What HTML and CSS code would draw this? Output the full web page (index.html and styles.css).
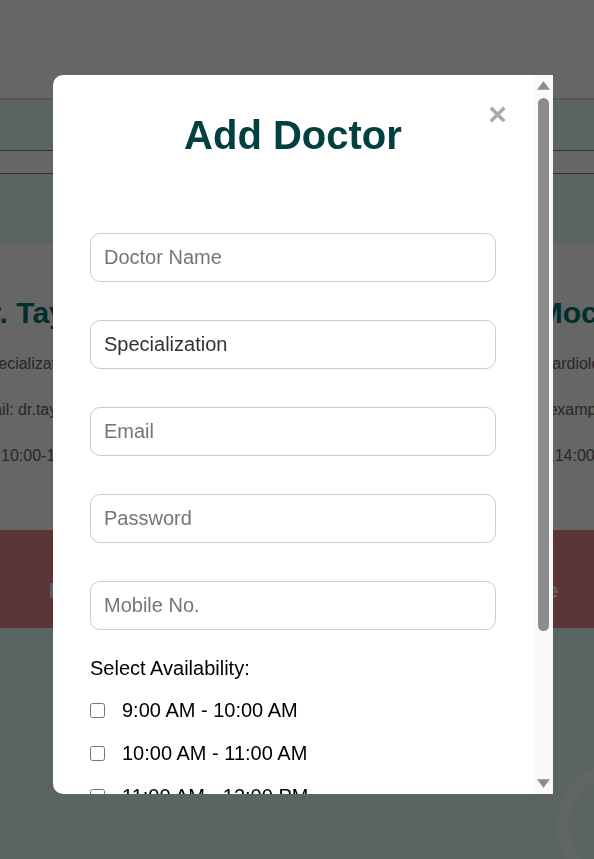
FILE: index.html
```html
<!DOCTYPE html>
<html lang="en">
<head>
<meta charset="utf-8">
<title>Add Doctor</title>
<link rel="stylesheet" href="styles.css">
</head>
<body>
<div class="page">
  <header class="site-header"></header>
  <nav class="nav-bar"></nav>
  <div class="sub-bar"></div>
  <section class="toolbar"></section>
  <section class="cards">
    <article class="card">
      <div class="card-body">
        <h3>Dr. Taylor Smith</h3>
        <p>Specialization: Dermatologist</p>
        <p>Email: dr.taylor@example.co.uk</p>
        <p>Mon,10:00-11:00,Fri,14:00-15:00</p>
      </div>
      <button class="delete-btn" type="button">Delete</button>
    </article>
    <article class="card">
      <div class="card-body">
        <h3>Dr. Sam Patel</h3>
        <p>Specialization: Neurology</p>
        <p>Email: dr.patel@example.com</p>
        <p>Wed,09:00-10:00,11:00-12:00</p>
      </div>
      <button class="delete-btn" type="button">Delete</button>
    </article>
    <article class="card">
      <div class="card-body">
        <h3>Dr. Lin Mock</h3>
        <p>Specialization: Cardiology</p>
        <p>Email: dr.lin.mock@example.com</p>
        <p>Tue,Fri,09:00-10:00,14:00-15:00</p>
      </div>
      <button class="delete-btn" type="button">Delete</button>
    </article>
  </section>
  <section class="lower"></section>
  <div class="ring"></div>
</div>

<div class="overlay">
  <div class="modal">
    <div class="modal-scroll">
      <span class="close">&times;</span>
      <h2 class="modal-title">Add Doctor</h2>
      <form class="doctor-form">
        <div class="fields">
          <input class="field" type="text" placeholder="Doctor Name">
          <input class="field" type="text" value="Specialization">
          <input class="field" type="email" placeholder="Email">
          <input class="field" type="password" placeholder="Password">
          <input class="field" type="tel" placeholder="Mobile No.">
        </div>
        <p class="avail-label">Select Availability:</p>
        <div class="slots">
          <label class="slot"><input type="checkbox"><span>9:00 AM - 10:00 AM</span></label>
          <label class="slot"><input type="checkbox"><span>10:00 AM - 11:00 AM</span></label>
          <label class="slot"><input type="checkbox"><span>11:00 AM - 12:00 PM</span></label>
          <label class="slot"><input type="checkbox"><span>2:00 PM - 3:00 PM</span></label>
          <label class="slot"><input type="checkbox"><span>3:00 PM - 4:00 PM</span></label>
        </div>
        <button class="submit-btn" type="submit">Add Doctor</button>
      </form>
    </div>
    <div class="scrollbar" aria-hidden="true">
      <svg class="sb-arrow" width="13" height="9" viewBox="0 0 13 9"><polygon points="6.5,0.5 12.5,8.5 0.5,8.5" fill="#8d8d8d" stroke="#8d8d8d" stroke-width="0.6" stroke-linejoin="round"/></svg>
      <div class="sb-thumb"></div>
      <div class="sb-space"></div>
      <svg class="sb-arrow" width="13" height="9" viewBox="0 0 13 9"><polygon points="0.5,0.5 12.5,0.5 6.5,8.5" fill="#8d8d8d" stroke="#8d8d8d" stroke-width="0.6" stroke-linejoin="round"/></svg>
    </div>
  </div>
</div>
</body>
</html>
```

FILE: styles.css
```css
html, body {
  margin: 0;
  padding: 0;
  height: 100%;
  overflow: hidden;
}

body {
  font-family: "Liberation Sans", Arial, sans-serif;
  background: #e1faf5;
}

.page {
  position: relative;
  width: 594px;
  height: 859px;
  overflow: hidden;
  display: flex;
  flex-direction: column;
}

.site-header {
  height: 98px;
  background: #ffffff;
  border-bottom: 2px solid #d9d9d9;
  flex: none;
}

.nav-bar {
  height: 50px;
  background: #e1faf5;
  border-bottom: 1px solid #787878;
  flex: none;
}

.sub-bar {
  height: 22px;
  background: #ffffff;
  border-bottom: 1px solid #787878;
  flex: none;
}

.toolbar {
  height: 70px;
  background: #e1faf5;
  flex: none;
}

.cards {
  display: grid;
  grid-template-columns: repeat(3, minmax(0, 1fr));
  width: 665px;
  margin-left: -29px;
  flex: none;
}

.card {
  display: flex;
  flex-direction: column;
  white-space: nowrap;
  min-width: 0;
}

.card-body {
  height: 286px;
  box-sizing: border-box;
  background: #ffffff;
  display: flex;
  flex-direction: column;
  align-items: center;
  padding-top: 54px;
}

.card-body h3 {
  margin: 0 0 27px;
  font-size: 30px;
  line-height: 30px;
  font-weight: bold;
  color: #00796b;
}

.card-body p {
  margin: 0 0 28px;
  font-size: 16px;
  line-height: 18px;
  color: #666666;
}

.delete-btn {
  height: 98px;
  box-sizing: border-box;
  border: 0;
  margin: 0;
  padding: 48px 0 25px;
  background: #e68587;
  color: #f2f2f2;
  font-family: inherit;
  font-size: 22px;
  line-height: 25px;
  font-weight: bold;
  text-align: center;
}

.lower {
  flex: 1;
  background: #e1faf5;
}

.ring {
  position: absolute;
  left: 557px;
  top: 763px;
  width: 102px;
  height: 102px;
  border-radius: 50%;
  border: 12px solid rgba(255, 255, 255, 0.6);
}

.overlay {
  position: fixed;
  inset: 0;
  background: rgba(0, 0, 0, 0.6);
}

.modal {
  display: flex;
  margin: 75px 0 0 53px;
  width: 500px;
  height: 719px;
  overflow: hidden;
  background: #ffffff;
  border-radius: 10px 0 0 10px;
}

.modal-scroll {
  position: relative;
  flex: 1;
  min-width: 0;
  overflow: hidden;
  padding-top: 38px;
}

.close {
  position: absolute;
  top: 23px;
  right: 26px;
  font-size: 32px;
  line-height: 1;
  font-weight: bold;
  color: #aaaaaa;
  cursor: pointer;
}

.modal-title {
  margin: 0 0 75px;
  text-align: center;
  font-size: 40px;
  font-weight: bold;
  color: #004040;
}

.doctor-form {
  padding: 0 37px 36px;
}

.fields {
  display: flex;
  flex-direction: column;
  gap: 38px;
}

.field {
  display: block;
  width: 100%;
  box-sizing: border-box;
  margin: 0;
  padding: 12px 13px;
  border: 1px solid #cccccc;
  border-radius: 10px;
  font-family: inherit;
  font-size: 20px;
  line-height: 23px;
  height: 49px;
  color: #333333;
  background: #ffffff;
  outline: none;
}

.field::placeholder {
  color: #757575;
}

.avail-label {
  margin: 27px 0 0;
  font-size: 20px;
  line-height: 23px;
  color: #000000;
}

.slots {
  display: flex;
  flex-direction: column;
  gap: 20px;
  margin-top: 19px;
}

.slot {
  display: flex;
  align-items: center;
  height: 23px;
  font-size: 20px;
  line-height: 23px;
  color: #000000;
}

.slot input {
  width: 15px;
  height: 15px;
  margin: 0 17px 0 0;
  flex: none;
}

.submit-btn {
  display: block;
  width: 100%;
  height: 48px;
  margin-top: 25px;
  border: 0;
  border-radius: 10px;
  background: #00796b;
  color: #ffffff;
  font-family: inherit;
  font-size: 20px;
  font-weight: bold;
}

.scrollbar {
  flex: none;
  width: 20px;
  background: #fafafa;
  display: flex;
  flex-direction: column;
  align-items: center;
  padding: 6px 0 6px;
  box-sizing: border-box;
}

.sb-arrow {
  display: block;
  flex: none;
}

.sb-thumb {
  width: 11px;
  height: 533px;
  margin-top: 8px;
  border-radius: 6px;
  background: #8c8c8c;
  flex: none;
}

.sb-space {
  flex: 1;
}
```
